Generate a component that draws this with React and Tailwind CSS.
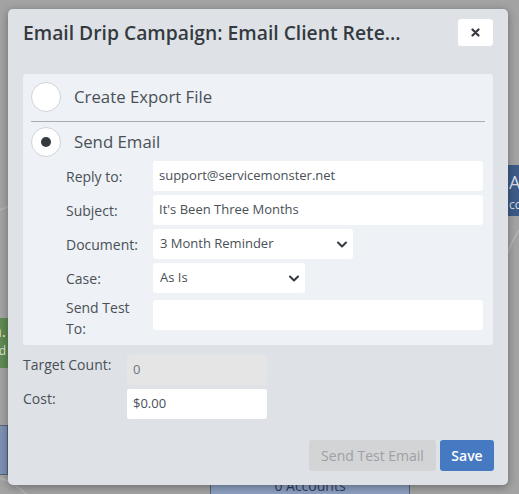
import React from "react";

const font = { fontFamily: '"Open Sans", "Noto Sans", sans-serif' };

function Chevron() {
  return (
    <svg width="10" height="7" viewBox="0 0 10 7" className="shrink-0">
      <path d="M1 1.5 L5 5.5 L9 1.5" fill="none" stroke="#343a40" strokeWidth="2" strokeLinecap="round" strokeLinejoin="round" />
    </svg>
  );
}

function Radio({ checked, label }) {
  return (
    <div className="flex items-center h-[30px]">
      <div className="w-[30px] h-[30px] rounded-full bg-white border border-[#cfd3d8] flex items-center justify-center shrink-0">
        {checked && <div className="w-[10px] h-[10px] rounded-full bg-[#343a40]" />}
      </div>
      <span className="ml-[13px] text-[16.8px] text-[#495057] leading-none">{label}</span>
    </div>
  );
}

function Field({ value }) {
  return (
    <div className="h-[30px] w-[330px] bg-white rounded-[3px] flex items-center px-[6px] text-[13px] text-[#495057]">
      {value}
    </div>
  );
}

function SelectBox({ value, width }) {
  return (
    <div className={`h-[30px] ${width} bg-white rounded-[3px] flex items-center justify-between pl-[7px] pr-[6px] text-[13px] text-[#495057]`}>
      <span>{value}</span>
      <Chevron />
    </div>
  );
}

export default function App() {
  return (
    <div className="relative w-[519px] h-[494px] overflow-hidden bg-[#a3a3a3]" style={font}>
      {/* background canvas (dimmed) */}
      <svg className="absolute inset-0" width="519" height="494">
        <path d="M519 230 C 500 260, 495 300, 505 330" fill="none" stroke="#b5b5b5" strokeWidth="1.5" />
        <path d="M0 210 C 20 200, 40 195, 60 190" fill="none" stroke="#b5b5b5" strokeWidth="1.5" />
        <path d="M0 478 C 12 482, 20 488, 26 494" fill="none" stroke="#b5b5b5" strokeWidth="1.5" />
      </svg>
      <div className="absolute left-[503px] top-[165px] w-[80px] h-[51px] bg-[#3e5b87] text-[#d5dbe6] pl-[6px]">
        <div className="text-[18px] leading-none mt-[8px]">Ac</div>
        <div className="text-[12px] leading-none mt-[8px]">cc</div>
      </div>
      <div className="absolute left-[-40px] top-[318px] w-[48px] h-[50px] bg-[#5f8a55] text-[#dfe8dc] text-right pr-[2px]">
        <div className="text-[16px] leading-none mt-[5px]">n.</div>
        <div className="text-[12px] leading-none mt-[6px]">ed</div>
      </div>
      <div className="absolute left-[-40px] top-[425px] w-[48px] h-[50px] bg-[#7c91b4] border border-[#55627a]" />
      <div className="absolute left-[210px] top-[468px] w-[200px] h-[40px] bg-[#8da0c1] border border-[#55627a] flex justify-center">
        <span className="text-[14px] text-[#2d3e63] mt-[6px]">0 Accounts</span>
      </div>

      {/* modal */}
      <div className="absolute left-[8px] top-[9px] w-[500px] h-[476px] bg-[#dee2e6] rounded-[5px] shadow-[0_2px_8px_rgba(0,0,0,0.35)] px-[15px] pt-[10px] flex flex-col">
        <div className="flex items-center justify-between h-[27px]">
          <h1 className="text-[19.3px] font-semibold text-[#343a40] leading-none">Email Drip Campaign: Email Client Rete...</h1>
          <button className="w-[35px] h-[27px] bg-white rounded-[3px] flex items-center justify-center">
            <svg width="9" height="9" viewBox="0 0 9 9">
              <path d="M1.5 1.5 L7.5 7.5 M7.5 1.5 L1.5 7.5" stroke="#343a40" strokeWidth="2.2" strokeLinecap="round" />
            </svg>
          </button>
        </div>

        <div className="mt-[28px] bg-[#eef1f5] rounded-[3px] px-[8px] pt-[8px] pb-[15px]">
          <Radio label="Create Export File" />
          <div className="h-px bg-[#a9adb2] mt-[9px] mb-[5px]" />
          <Radio checked label="Send Email" />

          <div className="mt-[4px] flex flex-col gap-[4px] text-[14px] text-[#495057]">
            <div className="flex items-center">
              <div className="w-[122px] pl-[35px]">Reply to:</div>
              <Field value="support@servicemonster.net" />
            </div>
            <div className="flex items-center">
              <div className="w-[122px] pl-[35px]">Subject:</div>
              <Field value="It's Been Three Months" />
            </div>
            <div className="flex items-center">
              <div className="w-[122px] pl-[35px]">Document:</div>
              <SelectBox value="3 Month Reminder" width="w-[200px]" />
            </div>
            <div className="flex items-center">
              <div className="w-[122px] pl-[35px]">Case:</div>
              <SelectBox value="As Is" width="w-[152px]" />
            </div>
            <div className="flex items-start mt-[3px] h-[30px]">
              <div className="w-[122px] h-[30px] pl-[35px] leading-[21px] -mt-[3px]">Send Test<br />To:</div>
              <Field value="" />
            </div>
          </div>
        </div>

        <div className="mt-[10px] flex flex-col gap-[4px] text-[14px] text-[#495057]">
          <div className="flex items-start">
            <div className="w-[104px] leading-[20px]">Target Count:</div>
            <div className="h-[30px] w-[140px] bg-[#e5e5e5] rounded-[3px] flex items-center px-[6px] text-[13px] text-[#6c757d]">0</div>
          </div>
          <div className="flex items-start">
            <div className="w-[104px] leading-[20px]">Cost:</div>
            <div className="h-[30px] w-[140px] bg-white rounded-[3px] flex items-center px-[6px] text-[13px] text-[#495057]">$0.00</div>
          </div>
        </div>

        <div className="mt-[21px] flex justify-end gap-[4px] -mr-[1px]">
          <button className="h-[31px] w-[127px] bg-[#d2d4d6] rounded-[3px] text-[14px] text-[#9ca1a6]">Send Test Email</button>
          <button className="h-[31px] w-[54px] bg-[#4579c1] rounded-[3px] text-[14px] font-semibold text-white">Save</button>
        </div>
      </div>
    </div>
  );
}
